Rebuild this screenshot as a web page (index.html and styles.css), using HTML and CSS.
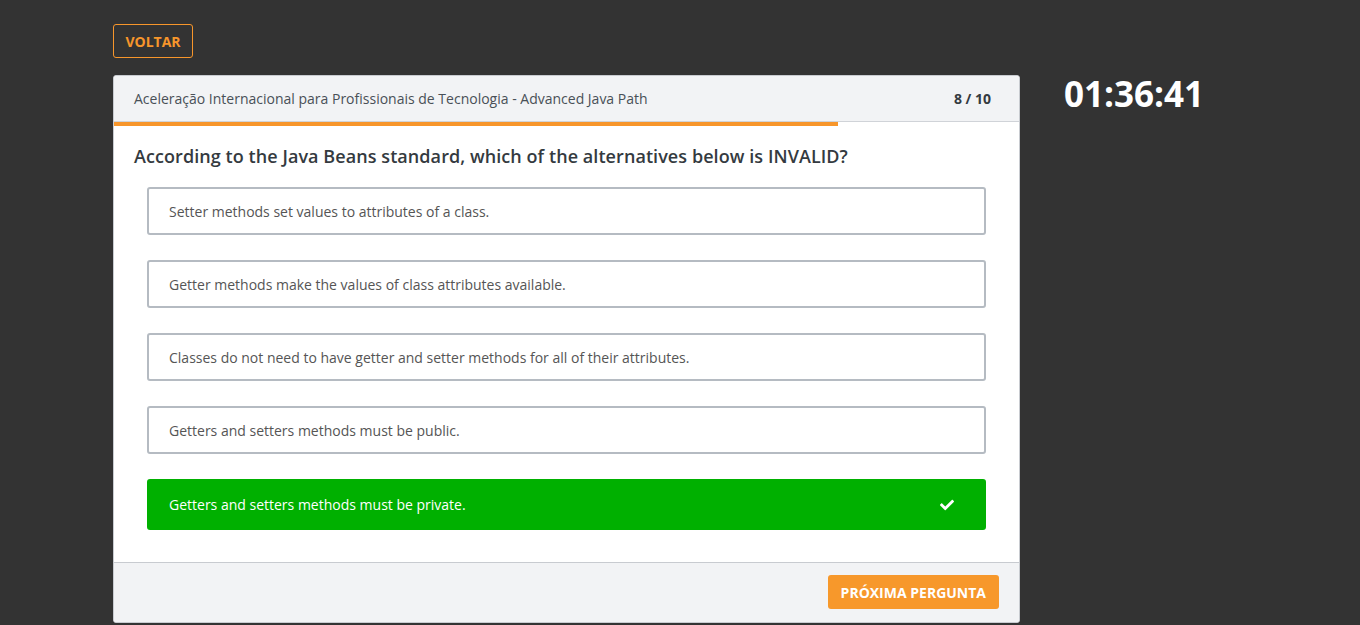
FILE: index.html
```html
<!DOCTYPE html>
<html lang="pt-BR">
<head>
<meta charset="utf-8">
<title>Quiz</title>
<link rel="stylesheet" href="styles.css">
</head>
<body>
<div class="page">
  <div class="topbar">
    <button class="btn-back">VOLTAR</button>
  </div>
  <div class="row">
    <div class="card">
      <div class="card-head">
        <span class="course">Aceleração Internacional para Profissionais de Tecnologia - Advanced Java Path</span>
        <span class="count">8 / 10</span>
      </div>
      <div class="progress"><div class="progress-fill" style="width:80%"></div></div>
      <div class="card-body">
        <h2 class="question">According to the Java Beans standard, which of the alternatives below is INVALID?</h2>
        <ul class="options">
          <li class="option">Setter methods set values to attributes of a class.</li>
          <li class="option">Getter methods make the values of class attributes available.</li>
          <li class="option">Classes do not need to have getter and setter methods for all of their attributes.</li>
          <li class="option">Getters and setters methods must be public.</li>
          <li class="option correct"><span>Getters and setters methods must be private.</span>
            <svg class="check" viewBox="0 0 512 512" width="14" height="14"><path fill="#fff" d="M173.9 439.4l-166.4-166.4c-10-10-10-26.2 0-36.2l36.2-36.2c10-10 26.2-10 36.2 0L192 312.7 432.1 72.6c10-10 26.2-10 36.2 0l36.2 36.2c10 10 10 26.2 0 36.2l-294.4 294.4c-10 10-26.2 10-36.2 0z"/></svg>
          </li>
        </ul>
      </div>
      <div class="card-foot">
        <button class="btn-next">PRÓXIMA PERGUNTA</button>
      </div>
    </div>
    <div class="timer">01:36:41</div>
  </div>
</div>
</body>
</html>
```

FILE: styles.css
```css
* { box-sizing: border-box; }
html, body { margin: 0; padding: 0; }
body {
  background: #333333;
  font-family: "Open Sans", "Liberation Sans", sans-serif;
  height: 625px;
  overflow: hidden;
}
.page {
  padding: 24px 0 0 113px;
}
.topbar { height: 51px; }
.btn-back {
  font-family: inherit;
  background: transparent;
  border: 1px solid #f7962b;
  color: #f7962b;
  font-weight: 700;
  font-size: 14px;
  height: 34px;
  width: 80px;
  padding: 0;
  border-radius: 3px;
  cursor: pointer;
}
.row {
  display: flex;
  align-items: flex-start;
}
.card {
  width: 907px;
  background: #fff;
  border: 1px solid #c8cbd0;
  border-radius: 3px;
  overflow: hidden;
}
.card-head {
  background: #f2f3f5;
  height: 46px;
  display: flex;
  align-items: center;
  justify-content: space-between;
  padding: 0 28px 0 20px;
  border-bottom: 1px solid #d0d3d8;
  font-size: 14px;
  color: #495057;
}
.count { font-weight: 700; color: #343a40; }
.progress { height: 4px; background: #fff; }
.progress-fill { height: 100%; background: #f7962b; }
.card-body { padding: 19px 33px 32px 20px; }
.question {
  margin: 0 0 19px 0;
  font-size: 18px;
  font-weight: 600;
  letter-spacing: 0.07px;
  color: #343a40;
  line-height: 23px;
}
.options {
  list-style: none;
  margin: 0;
  padding: 0 0 0 13px;
  display: flex;
  flex-direction: column;
  gap: 25px;
}
.option {
  height: 48px;
  border: 2px solid #b5bbc2;
  border-radius: 3px;
  display: flex;
  align-items: center;
  padding: 0 20px;
  font-size: 14px;
  color: #555;
}
.option.correct {
  height: 51px;
  background: #00b000;
  border-color: #00b000;
  color: #fff;
  font-weight: 500;
  justify-content: space-between;
  padding-right: 30px;
}
.check { display: block; }
.card-foot {
  background: #f2f3f5;
  border-top: 1px solid #c8cbd0;
  height: 60px;
  display: flex;
  justify-content: flex-end;
  align-items: flex-start;
  padding: 12px 20px 0 0;
}
.btn-next {
  font-family: inherit;
  background: #f7982b;
  border: none;
  color: #fff;
  font-weight: 700;
  font-size: 14px;
  height: 34px;
  padding: 0 13px;
  border-radius: 3px;
}
.timer {
  margin-left: 44px;
  color: #fff;
  font-weight: 700;
  font-size: 35px;
  line-height: 36px;
  margin-top: 1px;
}
```
